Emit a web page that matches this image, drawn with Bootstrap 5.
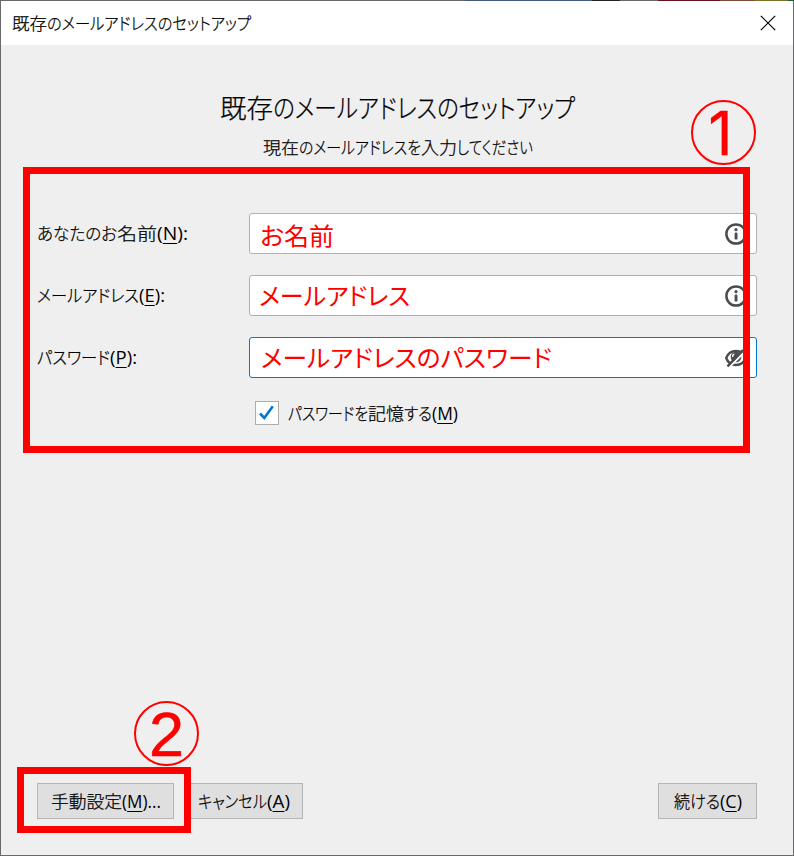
<!DOCTYPE html>
<html lang="ja">
<head>
<meta charset="utf-8">
<meta name="viewport" content="width=device-width, initial-scale=1">
<title>既存のメールアドレスのセットアップ</title>
<link href="https://cdn.jsdelivr.net/npm/bootstrap@5.3.0/dist/css/bootstrap.min.css" rel="stylesheet">
<style>
body{font-family:"Open Sans","Noto Sans CJK JP",sans-serif;font-size:17.6px;line-height:24px;color:#000;background:#efefef}
.window{width:794px;height:856px;border:1px solid #69696d;background:#efefef;overflow:hidden}
.top-edge{height:1px;left:0;right:0;top:0;background:linear-gradient(90deg,#69696d 0 465px,#455a80 465px 592px,#222 592px 620px,#69696d 620px 658px,#61151c 658px 720px,#7b4a32 720px 755px,#7a7028 755px 788px,#24583d 788px)}
.titlebar{height:44px;padding:0 17px 0 11px;background:#fff;font-size:17px}
.titlebar svg{margin-top:-1px}
.headline{font-size:26.4px;line-height:36px;margin-top:44px}
.subline{margin-top:10px;padding-left:1px}
.jp{font-family:"Noto Sans CJK JP",sans-serif;font-weight:300;-webkit-text-stroke:.25px currentColor}
.fit{display:inline-block;white-space:nowrap;font-feature-settings:"palt"}
.fit>span{display:inline-block;transform-origin:0 50%}
.key{text-decoration:underline;text-decoration-thickness:1px;text-underline-offset:3px}
.fields{margin-top:54px;padding:0 36px;row-gap:21px}
.caption{width:212px;padding-bottom:1px}
.field{height:41px;border:1px solid #b1b1b1;border-radius:3px;background:#fff;padding:0 9px}
.field.active{border-color:#0078d7}
.entry{color:#f00;font-size:24.4px;line-height:34px;padding-top:2px;font-weight:400;-webkit-text-stroke:0}
.raised{padding-top:0;padding-bottom:2px}
.indent-1{padding-left:1px}.indent-3{padding-left:2px}
.tick{width:24px;height:24px;border:1px solid #adadad;background:#fff;margin-right:9px}
.remember{padding-left:254px;margin-top:23px}
.actions{padding:0 36px 36px}
.push{height:36px;background:#dfdfdf;border:1px solid #b5b5b5}
.manual{width:137px}.cancel{width:116px;margin-left:13px;padding-right:2px}.proceed{width:99px}
.frame{border:7px solid red}
.frame-a{left:23px;top:167px;width:727px;height:286px}
.frame-b{left:17px;top:767px;width:174px;height:66px}
.step{width:65px;height:65px;border:2.4px solid red;border-radius:50%;color:red;-webkit-text-stroke:.5px red;font:400 63px/62px "Liberation Sans",sans-serif}
.step-a{left:691px;top:100px;padding-right:6px;font-family:Inter,sans-serif;font-size:60px;-webkit-text-stroke:.3px red}
.step-b{left:134px;top:701px}
</style>
<script src="https://cdn.jsdelivr.net/npm/bootstrap@5.3.0/dist/js/bootstrap.bundle.min.js"></script>
</head>
<body>
<div class="window position-relative d-flex flex-column">
  <header class="titlebar d-flex align-items-center justify-content-between flex-shrink-0">
    <div class="jp d-flex"><span class="fit" data-w="35">既存</span><span class="fit" data-w="204">のメールアドレスのセットアップ</span></div>
    <svg width="16" height="16" viewBox="0 0 16 16" stroke="#000" stroke-width="1.2"><path d="M.8.8l14.4 14.4M15.2.8L.8 15.2"/></svg>
  </header>
  <main class="flex-grow-1">
    <h1 class="headline jp mb-0 d-flex justify-content-center"><span class="fit" data-w="53">既存</span><span class="fit" data-w="302">のメールアドレスのセットアップ</span></h1>
    <div class="subline jp d-flex justify-content-center"><span class="fit" data-w="36">現在</span><span class="fit" data-w="122">のメールアドレスを</span><span class="fit" data-w="36">入力</span><span class="fit" data-w="76">してください</span></div>
    <form class="fields d-flex flex-column">
      <div class="d-flex align-items-center">
        <label class="caption d-flex"><span class="fit jp" data-w="80">あなたのお</span><span class="fit jp" data-w="40">名前</span><span class="fit" data-w="31">(<span class="key">N</span>):</span></label>
        <div class="field flex-grow-1 d-flex align-items-center justify-content-between">
          <div class="entry jp indent-1"><span class="fit" data-w="74">お名前</span></div>
          <svg width="22" height="22" viewBox="0 0 22 22"><circle cx="11" cy="11" r="9.6" fill="none" stroke="#4c4c4c" stroke-width="2.5"/><circle cx="11" cy="6.7" r="1.6" fill="#4c4c4c"/><rect x="9.6" y="9.6" width="2.9" height="7" rx="1.2" fill="#4c4c4c"/></svg>
        </div>
      </div>
      <div class="d-flex align-items-center">
        <label class="caption d-flex"><span class="fit jp" data-w="102">メールアドレス</span><span class="fit" data-w="26">(<span class="key">E</span>):</span></label>
        <div class="field flex-grow-1 d-flex align-items-center justify-content-between">
          <div class="entry raised jp"><span class="fit" data-w="151">メールアドレス</span></div>
          <svg width="22" height="22" viewBox="0 0 22 22"><circle cx="11" cy="11" r="9.6" fill="none" stroke="#4c4c4c" stroke-width="2.5"/><circle cx="11" cy="6.7" r="1.6" fill="#4c4c4c"/><rect x="9.6" y="9.6" width="2.9" height="7" rx="1.2" fill="#4c4c4c"/></svg>
        </div>
      </div>
      <div class="d-flex align-items-center">
        <label class="caption d-flex"><span class="fit jp" data-w="73">パスワード</span><span class="fit" data-w="27">(<span class="key">P</span>):</span></label>
        <div class="field active flex-grow-1 d-flex align-items-center justify-content-between">
          <div class="entry raised jp indent-3"><span class="fit" data-w="291">メールアドレスのパスワード</span></div>
          <svg width="22" height="22" viewBox="0 0 22 22"><path d="M1.2 11C3 6.2 6.5 4 11 4s8 2.2 9.8 7c-1.8 4.8-5.300 7-9.800 7s-8-2.200-9.800-7z" fill="none" stroke="#4c4c4c" stroke-width="2.4"/><circle cx="11" cy="10" r="5.300" fill="#4c4c4c"/><path d="M9.300 7.200c-1.500.5-1.800 1.700-1.500 2.800" stroke="#fff" stroke-width="1.300" fill="none"/><path d="M4.500 20L20 4.500" stroke="#fff" stroke-width="1.800"/><path d="M2.500 19.300L18 3" stroke="#4c4c4c" stroke-width="2.400"/></svg>
        </div>
      </div>
    </form>
    <div class="remember d-flex align-items-center">
      <span class="tick d-flex align-items-center justify-content-center"><svg width="18" height="18" viewBox="0 0 18 18"><path d="M2 9.500l4.300 4.500L14.800 2.300" fill="none" stroke="#0078d7" stroke-width="2.600"/></svg></span>
      <span class="fit jp" data-w="80">パスワードを</span><span class="fit jp" data-w="36">記憶</span><span class="fit jp" data-w="28">する</span><span class="fit" data-w="26">(<span class="key">M</span>)</span>
    </div>
  </main>
  <footer class="actions d-flex">
    <div class="push manual d-flex align-items-center justify-content-center"><span class="fit jp" data-w="71">手動設定</span><span class="fit" data-w="39">(<span class="key">M</span>)...</span></div>
    <div class="push cancel d-flex align-items-center justify-content-center"><span class="fit jp" data-w="69">キャンセル</span><span class="fit" data-w="23">(<span class="key">A</span>)</span></div>
    <div class="push proceed ms-auto d-flex align-items-center justify-content-center"><span class="fit jp" data-w="46">続ける</span><span class="fit" data-w="22">(<span class="key">C</span>)</span></div>
  </footer>
</div>
<div class="top-edge position-absolute"></div>
<div class="frame frame-a position-absolute"></div>
<div class="frame frame-b position-absolute"></div>
<div class="step step-a position-absolute text-center">1</div>
<div class="step step-b position-absolute text-center">2</div>
<script>
// Condense each run of text to its column width.
document.querySelectorAll('.fit').forEach(function (run) {
  var inner = document.createElement('span');
  while (run.firstChild) inner.appendChild(run.firstChild);
  run.appendChild(inner);
  var natural = inner.getBoundingClientRect().width;
  var w = parseFloat(run.dataset.w);
  run.style.width = w + 'px';
  inner.style.transform = 'scaleX(' + (w / natural) + ')';
});
</script>
</body>
</html>
